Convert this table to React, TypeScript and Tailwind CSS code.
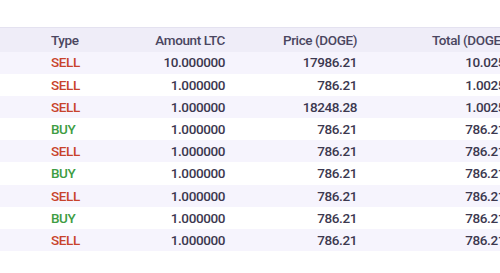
const rows = [
  { type: 'SELL', amount: '10.000000', price: '17986.21', total: '10.025' },
  { type: 'SELL', amount: '1.000000', price: '786.21', total: '1.0025' },
  { type: 'SELL', amount: '1.000000', price: '18248.28', total: '1.0025' },
  { type: 'BUY', amount: '1.000000', price: '786.21', total: '786.21' },
  { type: 'SELL', amount: '1.000000', price: '786.21', total: '786.21' },
  { type: 'BUY', amount: '1.000000', price: '786.21', total: '786.21' },
  { type: 'SELL', amount: '1.000000', price: '786.21', total: '786.21' },
  { type: 'BUY', amount: '1.000000', price: '786.21', total: '786.21' },
  { type: 'SELL', amount: '1.000000', price: '786.21', total: '786.21' },
]

export default function App() {
  return (
    <div className="w-[500px] h-[273px] overflow-hidden bg-white font-['Roboto',sans-serif] text-[13.5px] font-medium tracking-[-0.4px]">
      <div className="mt-[27px] w-[560px] border-t border-[#e4e2f0]">
        {/* header */}
        <div className="flex h-[23.5px] items-center bg-[#efedf8] pl-[39px] text-[#4a4660]">
          <div className="w-[80px] px-3">Type</div>
          <div className="w-[118px] px-3 text-right">Amount LTC</div>
          <div className="w-[132px] px-3 text-right">Price (DOGE)</div>
          <div className="w-[148px] px-3 text-right whitespace-nowrap">Total (DOGE)</div>
        </div>
        {rows.map((r, i) => (
          <div
            key={i}
            className={`flex h-[22.2px] items-center pl-[39px] text-[#3c384f] ${i % 2 === 0 ? 'bg-[#f6f4fd]' : 'bg-white'}`}
          >
            <div className={`w-[80px] px-3 ${r.type === 'SELL' ? 'text-[#c8432c]' : 'text-[#3e9d43]'}`}>{r.type}</div>
            <div className="w-[118px] px-3 text-right">{r.amount}</div>
            <div className="w-[132px] px-3 text-right">{r.price}</div>
            <div className="w-[148px] px-3 text-right">{r.total}</div>
          </div>
        ))}
      </div>
    </div>
  )
}
